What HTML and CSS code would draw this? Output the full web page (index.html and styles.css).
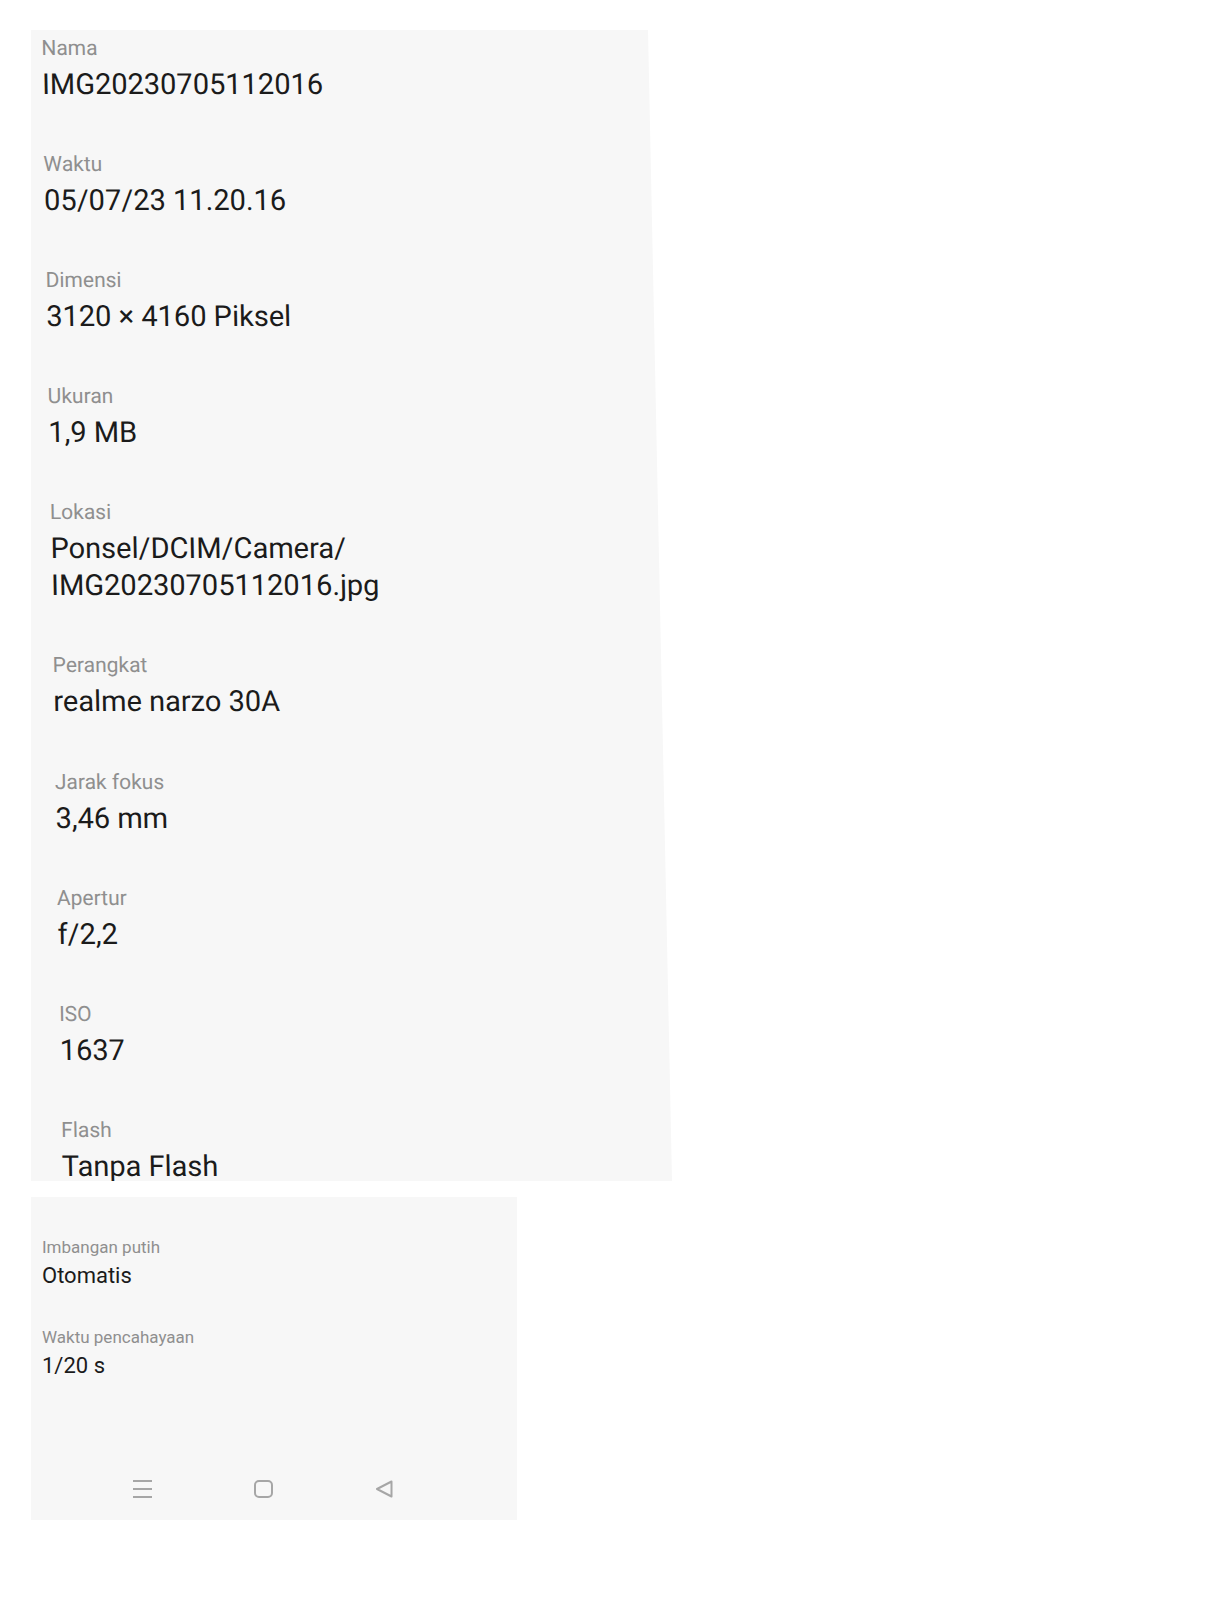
FILE: index.html
```html
<!DOCTYPE html>
<html lang="id">
<head>
<meta charset="utf-8">
<title>Detail</title>
<link rel="stylesheet" href="styles.css">
</head>
<body>
<main class="page">
  <section class="panel panel-main">
    <div class="list list-skew">
      <div class="item"><div class="label">Nama</div><div class="value">IMG20230705112016</div></div>
      <div class="item"><div class="label">Waktu</div><div class="value">05/07/23 11.20.16</div></div>
      <div class="item"><div class="label">Dimensi</div><div class="value">3120 × 4160 Piksel</div></div>
      <div class="item"><div class="label">Ukuran</div><div class="value">1,9 MB</div></div>
      <div class="item"><div class="label">Lokasi</div><div class="value">Ponsel/DCIM/Camera/<br>IMG20230705112016.jpg</div></div>
      <div class="item"><div class="label">Perangkat</div><div class="value">realme narzo 30A</div></div>
      <div class="item"><div class="label">Jarak fokus</div><div class="value">3,46 mm</div></div>
      <div class="item"><div class="label">Apertur</div><div class="value">f/2,2</div></div>
      <div class="item"><div class="label">ISO</div><div class="value">1637</div></div>
      <div class="item"><div class="label">Flash</div><div class="value">Tanpa Flash</div></div>
    </div>
  </section>

  <section class="panel panel-sub">
    <div class="list list-small">
      <div class="item"><div class="label">Imbangan putih</div><div class="value">Otomatis</div></div>
      <div class="item"><div class="label">Waktu pencahayaan</div><div class="value">1/20 s</div></div>
    </div>
    <nav class="navbar">
      <svg class="nav-icon" width="19" height="18" viewBox="0 0 19 18" aria-label="Menu">
        <path d="M0 1H19M0 9H19M0 17H19" fill="none" stroke="#a6a6a6" stroke-width="2"/>
      </svg>
      <svg class="nav-icon" width="19" height="18" viewBox="0 0 19 18" aria-label="Beranda">
        <rect x="1" y="1" width="17" height="16" rx="4" fill="none" stroke="#a6a6a6" stroke-width="2"/>
      </svg>
      <svg class="nav-icon" width="19" height="18" viewBox="0 0 19 18" aria-label="Kembali">
        <path d="M16.5 1.5L2 9L16.5 16.5Z" fill="none" stroke="#a6a6a6" stroke-width="2" stroke-linejoin="round"/>
      </svg>
    </nav>
  </section>
</main>
</body>
</html>
```
FILE: styles.css
```css
html, body {
  margin: 0;
  padding: 0;
  background: #ffffff;
}

body {
  font-family: Roboto, "Noto Sans", "Liberation Sans", sans-serif;
}

.page {
  display: flex;
  flex-direction: column;
  align-items: flex-start;
  padding: 30px 0 0 31px;
  gap: 16px;
}

.panel {
  background: #f7f7f7;
  box-sizing: border-box;
}

.panel-main {
  width: 641px;
  height: 1151px;
  overflow: hidden;
  clip-path: polygon(0 0, 617px 0, 100% 100%, 0 100%);
}

.list {
  display: flex;
  flex-direction: column;
}

.list-skew {
  padding: 6px 0 0 10px;
  gap: 49.1px;
  transform: skewX(1.05deg);
  transform-origin: 0 0;
}

.list-skew .label {
  font-size: 21px;
  line-height: 24px;
  color: #8f8f8f;
}

.list-skew .value {
  font-size: 29px;
  line-height: 37px;
  margin-top: 6px;
  color: #1b1b1b;
}

.panel-sub {
  width: 486px;
  height: 323px;
  display: flex;
  flex-direction: column;
  padding: 40px 0 22px 0;
}

.list-small {
  padding-left: 11px;
  gap: 37px;
}

.list-small .label {
  font-size: 17px;
  line-height: 20px;
  color: #8f8f8f;
}

.list-small .value {
  font-size: 22px;
  line-height: 28px;
  margin-top: 5px;
  color: #1b1b1b;
}

.navbar {
  margin-top: auto;
  display: flex;
  gap: 102px;
  padding-left: 102px;
}

.nav-icon {
  display: block;
}
```
